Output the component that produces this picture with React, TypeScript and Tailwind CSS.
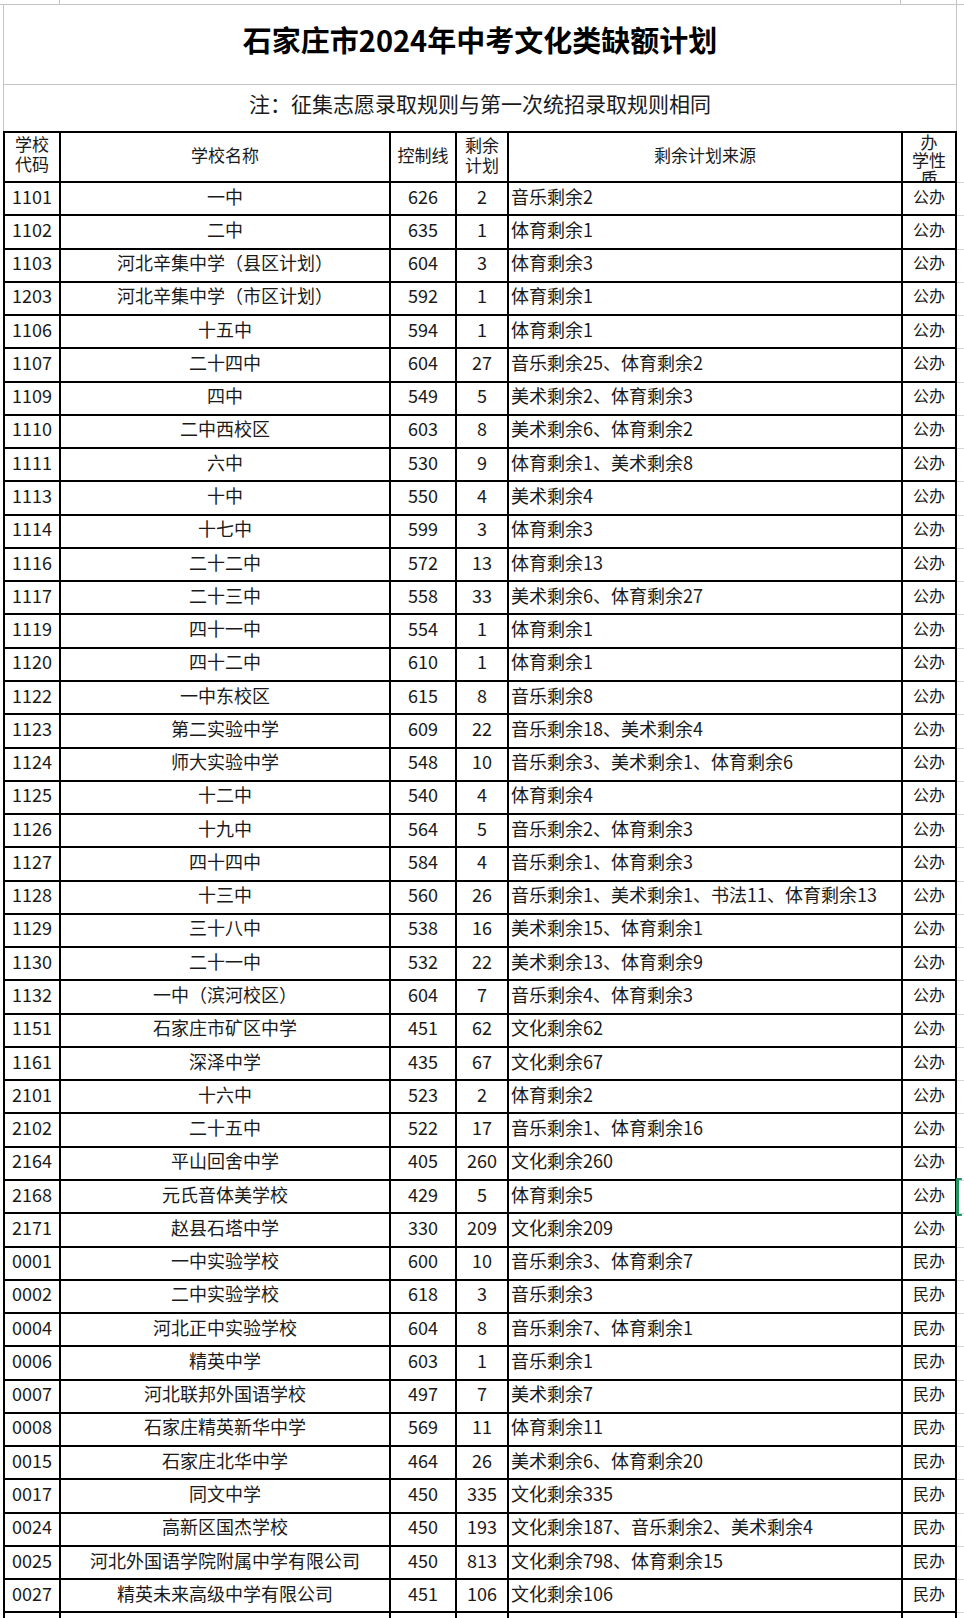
import React from 'react';

// 学校代码, 学校名称, 控制线, 剩余计划, 剩余计划来源, 办学性质
type Row = [string, string, string, string, string, string];

const rows: Row[] = [
  ['1101', '一中', '626', '2', '音乐剩余2', '公办'],
  ['1102', '二中', '635', '1', '体育剩余1', '公办'],
  ['1103', '河北辛集中学（县区计划）', '604', '3', '体育剩余3', '公办'],
  ['1203', '河北辛集中学（市区计划）', '592', '1', '体育剩余1', '公办'],
  ['1106', '十五中', '594', '1', '体育剩余1', '公办'],
  ['1107', '二十四中', '604', '27', '音乐剩余25、体育剩余2', '公办'],
  ['1109', '四中', '549', '5', '美术剩余2、体育剩余3', '公办'],
  ['1110', '二中西校区', '603', '8', '美术剩余6、体育剩余2', '公办'],
  ['1111', '六中', '530', '9', '体育剩余1、美术剩余8', '公办'],
  ['1113', '十中', '550', '4', '美术剩余4', '公办'],
  ['1114', '十七中', '599', '3', '体育剩余3', '公办'],
  ['1116', '二十二中', '572', '13', '体育剩余13', '公办'],
  ['1117', '二十三中', '558', '33', '美术剩余6、体育剩余27', '公办'],
  ['1119', '四十一中', '554', '1', '体育剩余1', '公办'],
  ['1120', '四十二中', '610', '1', '体育剩余1', '公办'],
  ['1122', '一中东校区', '615', '8', '音乐剩余8', '公办'],
  ['1123', '第二实验中学', '609', '22', '音乐剩余18、美术剩余4', '公办'],
  ['1124', '师大实验中学', '548', '10', '音乐剩余3、美术剩余1、体育剩余6', '公办'],
  ['1125', '十二中', '540', '4', '体育剩余4', '公办'],
  ['1126', '十九中', '564', '5', '音乐剩余2、体育剩余3', '公办'],
  ['1127', '四十四中', '584', '4', '音乐剩余1、体育剩余3', '公办'],
  ['1128', '十三中', '560', '26', '音乐剩余1、美术剩余1、书法11、体育剩余13', '公办'],
  ['1129', '三十八中', '538', '16', '美术剩余15、体育剩余1', '公办'],
  ['1130', '二十一中', '532', '22', '美术剩余13、体育剩余9', '公办'],
  ['1132', '一中（滨河校区）', '604', '7', '音乐剩余4、体育剩余3', '公办'],
  ['1151', '石家庄市矿区中学', '451', '62', '文化剩余62', '公办'],
  ['1161', '深泽中学', '435', '67', '文化剩余67', '公办'],
  ['2101', '十六中', '523', '2', '体育剩余2', '公办'],
  ['2102', '二十五中', '522', '17', '音乐剩余1、体育剩余16', '公办'],
  ['2164', '平山回舍中学', '405', '260', '文化剩余260', '公办'],
  ['2168', '元氏音体美学校', '429', '5', '体育剩余5', '公办'],
  ['2171', '赵县石塔中学', '330', '209', '文化剩余209', '公办'],
  ['0001', '一中实验学校', '600', '10', '音乐剩余3、体育剩余7', '民办'],
  ['0002', '二中实验学校', '618', '3', '音乐剩余3', '民办'],
  ['0004', '河北正中实验学校', '604', '8', '音乐剩余7、体育剩余1', '民办'],
  ['0006', '精英中学', '603', '1', '音乐剩余1', '民办'],
  ['0007', '河北联邦外国语学校', '497', '7', '美术剩余7', '民办'],
  ['0008', '石家庄精英新华中学', '569', '11', '体育剩余11', '民办'],
  ['0015', '石家庄北华中学', '464', '26', '美术剩余6、体育剩余20', '民办'],
  ['0017', '同文中学', '450', '335', '文化剩余335', '民办'],
  ['0024', '高新区国杰学校', '450', '193', '文化剩余187、音乐剩余2、美术剩余4', '民办'],
  ['0025', '河北外国语学院附属中学有限公司', '450', '813', '文化剩余798、体育剩余15', '民办'],
  ['0027', '精英未来高级中学有限公司', '451', '106', '文化剩余106', '民办'],
];

const grid = 'grid grid-cols-[58px_330px_66px_52px_394px_54px_7px]';
const cell = 'flex items-center justify-center overflow-hidden whitespace-nowrap border-r-2 border-b-2 border-black';

const DataRow = ({ row }: { row: Row }) => (
  <div className={`${grid} h-[33.28px] text-[18px] leading-[24px]`}>
    <div className={`${cell} border-l-2 pb-[6px]`}>{row[0]}</div>
    <div className={`${cell} pb-[6px]`}>{row[1]}</div>
    <div className={`${cell} pb-[6px]`}>{row[2]}</div>
    <div className={`${cell} pb-[6px]`}>{row[3]}</div>
    <div className={`${cell} justify-start pl-[2px] pb-[6px]`}>{row[4]}</div>
    <div className={`${cell} text-[16px] pb-[6px]`}>{row[5]}</div>
    <div className="border-b border-[#d6d6d6]" />
  </div>
);

export default function App() {
  return (
    <div className="relative w-[964px] h-[1618px] overflow-hidden bg-white text-[#1a1a1a] font-['Noto_Sans_CJK_SC',sans-serif]">
      {/* sliver of the spreadsheet row above */}
      <div className="flex h-[5px] border-b border-[#c4c4c4]">
        <div className="w-[60px] border-r border-[#c4c4c4]" />
        <div className="w-[841px] border-r border-[#c4c4c4]" />
        <div className="w-[56px] border-r border-[#c4c4c4]" />
      </div>

      {/* Title */}
      <div className="ml-[3px] w-[954px] h-[80px] border-x border-b border-[#c4c4c4] flex items-center justify-center pb-[10px]">
        <h1 className="text-[29px] font-bold text-black leading-none">石家庄市2024年中考文化类缺额计划</h1>
      </div>

      {/* Note */}
      <div className="ml-[3px] w-[954px] h-[46px] border-x border-[#c4c4c4] flex items-center justify-center pb-[10px]">
        <p className="text-[21px] leading-none">注：征集志愿录取规则与第一次统招录取规则相同</p>
      </div>

      {/* Table */}
      <div className="ml-[3px]">
        <div className={`${grid} h-[52px] text-[17px] leading-[20px]`}>
          <div className={`${cell} border-l-2 border-t-2 flex-col pb-[6px]`}>
            <span>学校</span>
            <span>代码</span>
          </div>
          <div className={`${cell} border-t-2 pb-[5px]`}>学校名称</div>
          <div className={`${cell} border-t-2 pb-[5px]`}>控制线</div>
          <div className={`${cell} border-t-2 flex-col pb-[5px]`}>
            <span>剩余</span>
            <span>计划</span>
          </div>
          <div className={`${cell} border-t-2 pb-[5px]`}>剩余计划来源</div>
          <div className={`${cell} border-t-2 flex-col justify-start leading-[18px]`}>
            <span>办</span>
            <span>学性</span>
            <span>质</span>
          </div>
          <div className="border-b border-[#d6d6d6]" />
        </div>

        {rows.map((row) => (
          <DataRow key={row[0]} row={row} />
        ))}

        {/* next row, cut off by the screenshot */}
        <div className={`${grid} h-[33.28px]`}>
          <div className={`${cell} border-l-2`} />
          <div className={cell} />
          <div className={cell} />
          <div className={cell} />
          <div className={cell} />
          <div className={cell} />
          <div />
        </div>
      </div>

      {/* spreadsheet selection handle */}
      <div className="absolute left-[956px] top-[1178px] w-[6px] h-[38px] border-l-[3px] border-y-2 border-[#23935f] rounded-[1px]" />
    </div>
  );
}
